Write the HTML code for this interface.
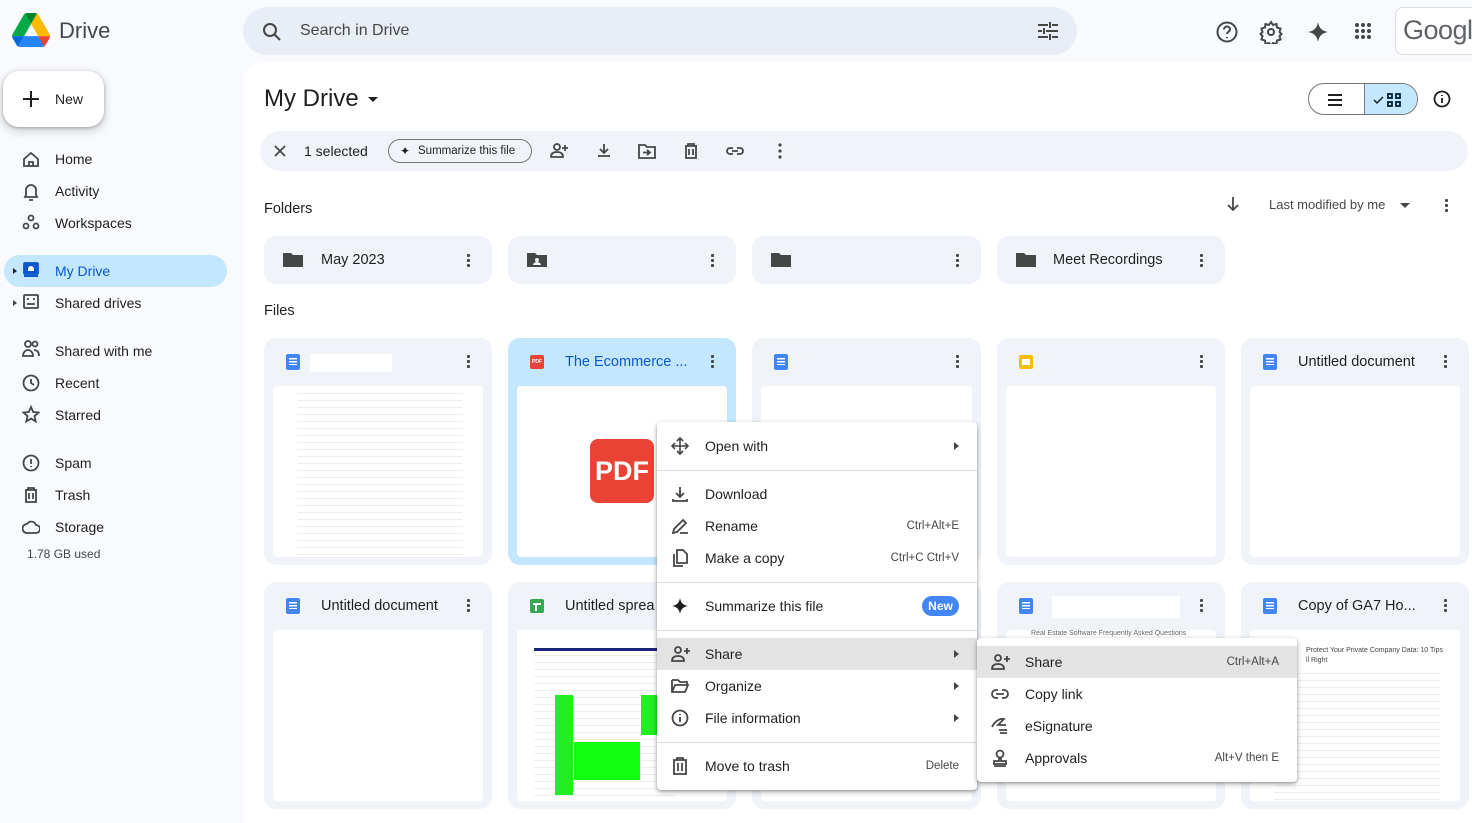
<!DOCTYPE html>
<html><head><meta charset="utf-8"><style>
*{box-sizing:border-box;margin:0;padding:0}
body{width:1472px;height:814px;overflow:hidden;background:#f8fafd;font-family:"Liberation Sans",Arial,sans-serif;color:#1f1f1f;position:relative}
.a{position:absolute}
.nav{position:absolute;left:55px;font-size:14px;color:#1f1f1f}
.card{position:absolute;background:#f0f4f9;border-radius:12px}
.fc{position:absolute;background:#f0f4f9;border-radius:12px;width:228px;height:227px}
.fc .t{position:absolute;left:57px;top:16px;font-size:14.5px;font-weight:500}
.fc .pv{position:absolute;left:9px;top:48px;right:9px;bottom:8px;background:#fff;border-radius:4px;overflow:hidden}
.dots{position:absolute;width:3px;height:15px;background:radial-gradient(circle,#444746 1.5px,transparent 1.6px) 0 0/3px 5px}
.doc{position:absolute;width:14px;height:16px;background:#4285f4;border-radius:2px}
.doc:after{content:"";position:absolute;left:3px;top:4px;width:8px;height:7px;background:linear-gradient(#fff 0 1.5px,transparent 1.5px 3px,#fff 3px 4.5px,transparent 4.5px 6px,#fff 6px 7.5px)}
.lines{position:absolute;left:24px;right:20px;height:170px;background:repeating-linear-gradient(#fff 0 3px,#eee 3px 4px,#fff 4px 6px,#fff 6px 7px)}
.menu{position:absolute;background:#fff;box-shadow:0 2px 6px rgba(0,0,0,.3),0 1px 2px rgba(0,0,0,.2);border-radius:4px}
.mi{position:absolute;left:0;right:0;height:32px;font-size:14px;line-height:32px}
.mi .l{position:absolute;left:48px}
.mi .k{position:absolute;right:18px;font-size:11.5px;color:#444746}
.mi .ar{position:absolute;right:18px;top:12px;border-left:5px solid #444746;border-top:4px solid transparent;border-bottom:4px solid transparent}
.mi svg{position:absolute;left:14px;top:7px}
.sep{position:absolute;left:0;right:0;height:1px;background:#dadce0}
</style></head><body>
<svg class="a" style="left:12px;top:13px" width="38" height="34" viewBox="0 0 87 78"><path d="M6.6 66.85l3.85 6.65c.8 1.4 1.950 2.5 3.3 3.3L27.5 53H0c0 1.55.4 3.1 1.2 4.5z" fill="#0066da"/><path d="M43.65 25L29.9 1.2c-1.35.8-2.5 1.9-3.3 3.3L1.2 48.5A9 9 0 000 53h27.5z" fill="#00ac47"/><path d="M73.55 76.8c1.35-.8 2.5-1.9 3.3-3.3l1.6-2.75 7.65-13.25c.8-1.4 1.2-2.950 1.2-4.5H59.8l5.85 11.5z" fill="#ea4335"/><path d="M43.65 25L57.4 1.2C56.05.4 54.5 0 52.9 0H34.4c-1.6 0-3.15.45-4.5 1.2z" fill="#00832d"/><path d="M59.8 53H27.5L13.75 76.8c1.35.8 2.9 1.2 4.5 1.2h50.8c1.6 0 3.15-.45 4.5-1.2z" fill="#2684fc"/><path d="M73.4 26.5L60.7 4.5c-.8-1.4-1.95-2.5-3.3-3.3L43.65 25 59.8 53h27.45c0-1.55-.4-3.1-1.2-4.5z" fill="#ffba00"/></svg>
<div class="a" style="left:59px;top:18px;font-size:22px;color:#444746">Drive</div>
<div class="a" style="left:3px;top:71px;width:101px;height:56px;background:#fff;border-radius:16px;box-shadow:0 1px 3px rgba(0,0,0,.3),0 4px 8px 3px rgba(0,0,0,.1)"></div>
<div class="a" style="left:23px;top:98px;width:16px;height:2px;background:#1f1f1f"></div><div class="a" style="left:30px;top:91px;width:2px;height:16px;background:#1f1f1f"></div>
<div class="a" style="left:55px;top:91px;font-size:14px;font-weight:500">New</div>
<div class="a" style="left:4px;top:255px;width:223px;height:32px;background:#c2e7ff;border-radius:16px"></div>
<div class="a" style="left:13px;top:268px;border-left:4px solid #1f1f1f;border-top:3px solid transparent;border-bottom:3px solid transparent"></div>
<div class="a" style="left:13px;top:300px;border-left:4px solid #444746;border-top:3px solid transparent;border-bottom:3px solid transparent"></div>
<div class="nav" style="top:151px">Home</div><div class="nav" style="top:183px">Activity</div><div class="nav" style="top:215px">Workspaces</div>
<div class="nav" style="top:263px;color:#0b57d0">My Drive</div><div class="nav" style="top:295px">Shared drives</div>
<div class="nav" style="top:343px">Shared with me</div><div class="nav" style="top:375px">Recent</div><div class="nav" style="top:407px">Starred</div>
<div class="nav" style="top:455px">Spam</div><div class="nav" style="top:487px">Trash</div><div class="nav" style="top:519px">Storage</div>
<div class="a" style="left:27px;top:547px;font-size:12px;color:#444746">1.78 GB used</div>
<svg class="a" style="left:22px;top:150px" width="18" height="400" fill="none" stroke="#444746" stroke-width="1.8">
<path d="M2 9L9 3l7 6v7H2z"/><path d="M7 16v-4h4v4"/>
<path d="M4 45v-5a5 5 0 0110 0v5l1 2H3z M7 50h4"/>
<circle cx="9" cy="68" r="2.5"/><circle cx="4" cy="76" r="2.5"/><circle cx="14" cy="76" r="2.5"/>
<rect x="2" y="113" width="14" height="11" rx="1" fill="#0b57d0" stroke="#0b57d0"/><rect x="2" y="125" width="14" height="2" fill="#0b57d0" stroke="none"/><path d="M6 121h6v-2a3 3 0 00-6 0z" fill="#fff" stroke="none"/>
<rect x="2" y="145" width="14" height="13" rx="1"/><path d="M5 149h2M11 149h2M5 154h8"/>
<circle cx="6" cy="194" r="3"/><circle cx="13" cy="194" r="2.5"/><path d="M1 206c0-4 3-6 5-6s5 2 5 6z M12 200c3 0 5 2 5 6"/>
<circle cx="9" cy="233" r="7.5"/><path d="M9 229v4l3 2"/>
<path d="M9 257l2.2 5 5.3.5-4 3.6 1.2 5.3L9 268.6l-4.7 2.8 1.2-5.3-4-3.6 5.3-.5z"/>
<circle cx="9" cy="313" r="7.5"/><path d="M9 309v5M9 316v1"/>
<path d="M3 340h12M6 340v-2h6v2M4 340v12h10v-12M7 343v6M11 343v6"/>
<path d="M5 383h9a4 4 0 000-8 5 5 0 00-9-1 4 4 0 000 9z"/>
</svg>
<div class="a" style="left:243px;top:7px;width:834px;height:48px;background:#e9eef6;border-radius:24px"></div>
<svg class="a" style="left:262px;top:22px" width="20" height="20" fill="none" stroke="#444746" stroke-width="2"><circle cx="8" cy="8" r="6"/><path d="M12.5 12.5L18 18"/></svg>
<div class="a" style="left:300px;top:22px;font-size:16px;color:#444746">Search in Drive</div>
<svg class="a" style="left:1038px;top:22px" width="20" height="18" stroke="#444746" stroke-width="2"><path d="M0 3h10M14 3h6M12 0v6M0 9h4M8 9h12M6 6v6M0 15h10M14 15h6M12 12v6"/></svg>
<svg class="a" style="left:1215px;top:20px" width="170" height="24" fill="none" stroke="#444746" stroke-width="2"><circle cx="12" cy="12" r="9.5"/><path d="M9 9.5a3 3 0 116 0c0 2-3 2.5-3 4.5M12 17v1"/><circle cx="56" cy="12" r="3"/><path d="M56 2l2 3 3.5-1 .5 3.5 3.5 1-1 3.5 2 2-2 2 1 3.5-3.5 1-.5 3.5-3.5-1-2 3-2-3-3.5 1-.5-3.5-3.5-1 1-3.5-2-2 2-2-1-3.5 3.5-1 .5-3.5 3.5 1z"/><path d="M103 2c1 6 4 9 10 10-6 1-9 4-10 10-1-6-4-9-10-10 6-1 9-4 10-10z" fill="#444746" stroke="none"/><g fill="#444746" stroke="none"><circle cx="142" cy="5" r="2"/><circle cx="148" cy="5" r="2"/><circle cx="154" cy="5" r="2"/><circle cx="142" cy="11" r="2"/><circle cx="148" cy="11" r="2"/><circle cx="154" cy="11" r="2"/><circle cx="142" cy="17" r="2"/><circle cx="148" cy="17" r="2"/><circle cx="154" cy="17" r="2"/></g></svg>
<div class="a" style="left:1395px;top:7px;width:90px;height:48px;background:#fff;border:1px solid #dadce0;border-radius:8px;font-size:27px;color:#5f6368;padding:7px 0 0 7px;overflow:hidden;letter-spacing:-0.5px">Google</div>
<div class="a" style="left:244px;top:63px;width:1240px;height:760px;background:#fff;border-radius:16px 0 0 0"></div>
<div class="a" style="left:264px;top:85px;font-size:24px">My Drive</div>
<div class="a" style="left:368px;top:97px;border-top:5px solid #1f1f1f;border-left:5px solid transparent;border-right:5px solid transparent"></div>
<div class="a" style="left:1308px;top:83px;width:110px;height:32px;border:1px solid #747775;border-radius:16px;overflow:hidden"><div class="a" style="left:55px;top:0;width:55px;height:32px;background:#c2e7ff;border-left:1px solid #747775"></div></div>
<svg class="a" style="left:1326px;top:90px" width="130" height="20" fill="none" stroke="#1f1f1f" stroke-width="2"><path d="M2 5h14M2 10h14M2 15h14"/><path d="M48 10l3 3 6-6" stroke-width="1.5"/><g stroke-width="1.8" stroke="#001d35"><rect x="62" y="4" width="4" height="4"/><rect x="70" y="4" width="4" height="4"/><rect x="62" y="12" width="4" height="4"/><rect x="70" y="12" width="4" height="4"/></g><circle cx="116" cy="9" r="7.5" stroke-width="1.8"/><path d="M116 8v5M116 5v1" stroke-width="1.8"/></svg>
<div class="a" style="left:260px;top:131px;width:1208px;height:40px;background:#f0f4f9;border-radius:20px"></div>
<svg class="a" style="left:274px;top:145px" width="12" height="12" stroke="#444746" stroke-width="1.8"><path d="M1 1l10 10M11 1L1 11"/></svg>
<div class="a" style="left:304px;top:143px;font-size:14px">1 selected</div>
<div class="a" style="left:388px;top:139px;width:144px;height:24px;border:1px solid #747775;border-radius:12px;font-size:11.5px;padding:5px 0 0 29px;color:#1f1f1f">Summarize this file</div>
<div class="a" style="left:400px;top:144px;font-size:12px">✦</div>
<svg class="a" style="left:549px;top:141px" width="240" height="20" fill="none" stroke="#444746" stroke-width="1.8"><circle cx="8" cy="6" r="3"/><path d="M2 16c0-4 3-5 6-5s6 1 6 5zM16 4v6M13 7h6"/><path d="M55 3v9M51 8l4 4 4-4M49 15h12"/><path d="M90 4h6l2 2h8v11H90zM98 9l3 2.5-3 2.5M94 11.5h7"/><path d="M136 5h12M139 5V3h6v2M137 5v12h10V5M140 8v6M144 8v6"/><path d="M184 7h-3a3 3 0 000 6h3M188 7h3a3 3 0 010 6h-3M183 10h6"/><g fill="#444746" stroke="none"><circle cx="231" cy="4" r="1.6"/><circle cx="231" cy="10" r="1.6"/><circle cx="231" cy="16" r="1.6"/></g></svg>
<div class="a" style="left:264px;top:201px;font-size:14.5px;font-weight:500">Folders</div>
<svg class="a" style="left:1226px;top:196px" width="14" height="16" fill="none" stroke="#444746" stroke-width="1.8"><path d="M7 1v13M2 9l5 5 5-5"/></svg>
<div class="a" style="left:1269px;top:197px;font-size:13px;color:#444746">Last modified by me</div>
<div class="a" style="left:1400px;top:203px;border-top:5px solid #444746;border-left:5px solid transparent;border-right:5px solid transparent"></div>
<div class="dots" style="left:1445px;top:198px"></div>
<div class="card" style="left:264px;top:236px;width:228px;height:48px"></div>
<div class="card" style="left:508px;top:236px;width:228px;height:48px"></div>
<div class="card" style="left:752px;top:236px;width:229px;height:48px"></div>
<div class="card" style="left:997px;top:236px;width:228px;height:48px"></div>
<svg class="a" style="left:283px;top:251px" width="770" height="18" fill="#444746"><path d="M0 2h8l2 2h10v12H0z"/><path d="M244 2h8l2 2h10v12h-20z"/><circle cx="254" cy="9" r="2" fill="#f0f4f9"/><path d="M250 14a4 3 0 018 0z" fill="#f0f4f9"/><path d="M488 2h8l2 2h10v12h-20z"/><path d="M733 2h8l2 2h10v12h-20z"/></svg>
<div class="a" style="left:321px;top:252px;font-size:14.5px;font-weight:500">May 2023</div>
<div class="a" style="left:1053px;top:252px;font-size:14.5px;font-weight:500">Meet Recordings</div>
<div class="dots" style="left:467px;top:253px"></div><div class="dots" style="left:711px;top:253px"></div><div class="dots" style="left:956px;top:253px"></div><div class="dots" style="left:1200px;top:253px"></div>
<div class="a" style="left:264px;top:303px;font-size:14.5px;font-weight:500">Files</div>
<div class="fc" style="left:264px;top:338px"><div class="doc" style="left:22px;top:16px"></div><div class="a" style="left:46px;top:16px;width:82px;height:18px;background:#fff"></div><div class="dots" style="left:203px;top:16px"></div><div class="pv"><div class="lines" style="top:4px;left:24px"></div></div></div>
<div class="fc" style="left:508px;top:338px;background:#c2e7ff"><div class="a" style="left:22px;top:17px;width:14px;height:14px;background:#ea4335;border-radius:2px;font-size:5px;color:#fff;font-weight:bold;text-align:center;line-height:14px">PDF</div><div class="t" style="color:#0b57d0">The Ecommerce ...</div><div class="dots" style="left:203px;top:16px"></div><div class="pv" style="background:#fff"><div class="a" style="left:73px;top:53px;width:64px;height:64px;background:#ea4335;border-radius:8px;color:#fff;font-weight:bold;font-size:27px;text-align:center;line-height:64px">PDF</div></div></div>
<div class="fc" style="left:752px;top:338px;width:229px"><div class="doc" style="left:22px;top:16px"></div><div class="dots" style="left:204px;top:16px"></div><div class="pv"></div></div>
<div class="fc" style="left:997px;top:338px"><div class="a" style="left:22px;top:17px;width:14px;height:14px;background:#fbbc04;border-radius:2px"><div class="a" style="left:3px;top:4px;width:8px;height:6px;background:#fff"></div></div><div class="dots" style="left:203px;top:16px"></div><div class="pv"></div></div>
<div class="fc" style="left:1241px;top:338px"><div class="doc" style="left:22px;top:16px"></div><div class="t">Untitled document</div><div class="dots" style="left:203px;top:16px"></div><div class="pv"></div></div>
<div class="fc" style="left:264px;top:582px"><div class="doc" style="left:22px;top:16px"></div><div class="t">Untitled document</div><div class="dots" style="left:203px;top:16px"></div><div class="pv"></div></div>
<div class="fc" style="left:508px;top:582px"><div class="a" style="left:22px;top:17px;width:14px;height:14px;background:#34a853;border-radius:2px"><div class="a" style="left:3px;top:4px;width:8px;height:2px;background:#fff"></div><div class="a" style="left:5px;top:4px;width:2px;height:8px;background:#fff"></div></div><div class="t">Untitled sprea</div><div class="pv"><div class="a" style="left:17px;top:18px;width:140px;height:3px;background:#1a237e"></div><div class="lines" style="left:17px;top:22px;width:140px;height:150px"></div><div class="a" style="left:38px;top:65px;width:18px;height:100px;background:#22ee22"></div><div class="a" style="left:57px;top:112px;width:66px;height:38px;background:#11ff11"></div><div class="a" style="left:124px;top:65px;width:20px;height:40px;background:#22ee22"></div></div></div>
<div class="fc" style="left:752px;top:582px;width:229px"><div class="pv"></div></div>
<div class="fc" style="left:997px;top:582px"><div class="doc" style="left:22px;top:16px"></div><div class="a" style="left:55px;top:14px;width:128px;height:22px;background:#fff"></div><div class="dots" style="left:203px;top:16px"></div><div class="pv"><div class="a" style="left:25px;top:0;font-size:7px;color:#666">Real Estate Software Frequently Asked Questions</div></div></div>
<div class="fc" style="left:1241px;top:582px"><div class="doc" style="left:22px;top:16px"></div><div class="t">Copy of GA7 Ho...</div><div class="dots" style="left:203px;top:16px"></div><div class="pv"><div class="a" style="left:56px;top:16px;font-size:7px;line-height:10px;color:#444">Protect Your Private Company Data: 10 Tips<br>ll Right</div><div class="lines" style="left:24px;top:40px;height:130px"></div></div></div>
<div class="menu" style="left:657px;top:422px;width:320px;height:368px">
<div class="mi" style="top:8px"><svg width="18" height="18" fill="none" stroke="#444746" stroke-width="1.6"><path d="M9 1v16M1 9h16M6 4l3-3 3 3M6 14l3 3 3-3M4 6L1 9l3 3M14 6l3 3-3 3"/></svg><span class="l">Open with</span><span class="ar"></span></div>
<div class="sep" style="top:48px"></div>
<div class="mi" style="top:56px"><svg width="18" height="18" fill="none" stroke="#444746" stroke-width="1.8"><path d="M9 2v10M5 8l4 4 4-4M2 14v2h14v-2"/></svg><span class="l">Download</span></div>
<div class="mi" style="top:88px"><svg width="18" height="18" fill="none" stroke="#444746" stroke-width="1.8"><path d="M2 16l1-4 9-9 3 3-9 9zM9 16h8"/></svg><span class="l">Rename</span><span class="k">Ctrl+Alt+E</span></div>
<div class="mi" style="top:120px"><svg width="18" height="18" fill="none" stroke="#444746" stroke-width="1.8"><path d="M6 1h6l4 4v9H6zM3 5v12h9"/></svg><span class="l">Make a copy</span><span class="k">Ctrl+C Ctrl+V</span></div>
<div class="sep" style="top:160px"></div>
<div class="mi" style="top:168px"><svg width="18" height="18"><path d="M9 1c1 5 3 7 8 8-5 1-7 3-8 8-1-5-3-7-8-8 5-1 7-3 8-8z" fill="#1f1f1f"/></svg><span class="l">Summarize this file</span><span class="a" style="right:18px;top:6px;width:37px;height:20px;background:#4285f4;border-radius:10px;color:#fff;font-size:12px;font-weight:bold;line-height:20px;text-align:center">New</span></div>
<div class="sep" style="top:208px"></div>
<div class="mi" style="top:216px;background:#e3e3e3"><svg width="20" height="18" fill="none" stroke="#444746" stroke-width="1.8"><circle cx="7" cy="5" r="3"/><path d="M1 16c0-4 3-5 6-5s6 1 6 5zM16 3v6M13 6h6"/></svg><span class="l">Share</span><span class="ar"></span></div>
<div class="mi" style="top:248px"><svg width="18" height="18" fill="none" stroke="#444746" stroke-width="1.8"><path d="M1 3h6l2 2h7v3M1 3v12h13l3-7H4l-3 7"/></svg><span class="l">Organize</span><span class="ar"></span></div>
<div class="mi" style="top:280px"><svg width="18" height="18" fill="none" stroke="#444746" stroke-width="1.8"><circle cx="9" cy="9" r="7.5"/><path d="M9 8v5M9 5v1"/></svg><span class="l">File information</span><span class="ar"></span></div>
<div class="sep" style="top:320px"></div>
<div class="mi" style="top:328px"><svg width="18" height="18" fill="none" stroke="#444746" stroke-width="1.8"><path d="M2 3h14M6 3V1h6v2M3 3v14h12V3M7 6v8M11 6v8"/></svg><span class="l">Move to trash</span><span class="k">Delete</span></div>
</div>
<div class="menu" style="left:977px;top:638px;width:320px;height:144px">
<div class="mi" style="top:8px;background:#e3e3e3"><svg width="20" height="18" fill="none" stroke="#444746" stroke-width="1.8"><circle cx="7" cy="5" r="3"/><path d="M1 16c0-4 3-5 6-5s6 1 6 5zM16 3v6M13 6h6"/></svg><span class="l">Share</span><span class="k">Ctrl+Alt+A</span></div>
<div class="mi" style="top:40px"><svg width="18" height="18" fill="none" stroke="#444746" stroke-width="1.8"><path d="M7 5H5a4 4 0 000 8h2M11 5h2a4 4 0 010 8h-2M5 9h8"/></svg><span class="l">Copy link</span></div>
<div class="mi" style="top:72px"><svg width="18" height="18" fill="none" stroke="#444746" stroke-width="1.8"><path d="M1 10c3-6 8-9 12-8l-6 6h8M8 13h8M9 16h7"/></svg><span class="l">eSignature</span></div>
<div class="mi" style="top:104px"><svg width="18" height="18" fill="none" stroke="#444746" stroke-width="1.8"><circle cx="9" cy="5" r="3.5"/><path d="M8 9v3H3v3h12v-3h-5V9M3 17h12"/></svg><span class="l">Approvals</span><span class="k">Alt+V then E</span></div>
</div>
</body></html>
